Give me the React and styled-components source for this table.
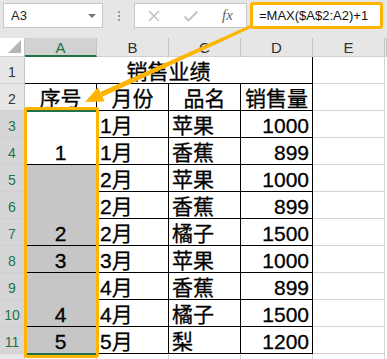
import React from 'react';
import styled, { createGlobalStyle } from 'styled-components';

const GlobalStyle = createGlobalStyle`
  body {
    margin: 0;
    background: #e6e6e6;
  }
`;

const Page = styled.div`
  position: relative;
  width: 387px;
  height: 359px;
  overflow: hidden;
  background: #e6e6e6;
  font-family: "Liberation Sans", "Noto Sans CJK SC", sans-serif;
`;

const Toolbar = styled.div`
  display: flex;
  align-items: flex-start;
  height: 38px;
  padding: 3px 0 0 3px;
  box-sizing: border-box;
`;

const NameBox = styled.div`
  width: 100px;
  height: 25px;
  box-sizing: border-box;
  background: #fff;
  border: 1px solid #c6c6c6;
  display: flex;
  align-items: center;
  justify-content: space-between;
  padding: 0 6px 0 7px;
  font-size: 13px;
  color: #222;
`;

const Caret = styled.span`
  width: 0;
  height: 0;
  border-left: 4px solid transparent;
  border-right: 4px solid transparent;
  border-top: 4px solid #777;
`;

const Dots = styled.div`
  width: 31px;
  height: 25px;
  display: flex;
  flex-direction: column;
  align-items: center;
  justify-content: center;
  gap: 2px;

  span {
    width: 2px;
    height: 2px;
    background: #9a9a9a;
  }
`;

const FxBox = styled.div`
  width: 113px;
  height: 25px;
  box-sizing: border-box;
  background: #fff;
  border: 1px solid #c6c6c6;
  display: flex;
  align-items: center;
  padding: 0 0 0 12px;
  gap: 22px;
`;

const Fx = styled.span`
  font-family: "Liberation Serif", serif;
  font-style: italic;
  font-size: 15px;
  color: #666;
  margin-left: 1px;
`;

const Formula = styled.div`
  margin: -1px 0 0 3px;
  width: 133px;
  height: 27px;
  box-sizing: border-box;
  background: #fff;
  border: 3px solid #ffb400;
  border-radius: 3px;
  display: flex;
  align-items: center;
  padding-left: 6px;
  font-size: 13px;
  color: #111;
`;

const Sheet = styled.div`
  display: grid;
  grid-template-columns: 25px repeat(5, 72px) 2px;
  grid-template-rows: 19px repeat(12, 27px);
  background: #fff;
`;

const ColHead = styled.div`
  grid-row: 1;
  grid-column: ${p => p.$c};
  box-sizing: border-box;
  background: ${p => (p.$sel ? '#d2d2d2' : '#e6e6e6')};
  border-right: 1px solid #c4c4c4;
  border-bottom: ${p => (p.$sel ? '2px solid #217346' : '1px solid #d0d0d0')};
  color: ${p => (p.$sel ? '#217346' : '#333')};
  font-size: 15px;
  display: flex;
  align-items: center;
  justify-content: center;
  padding-top: 1px;
`;

const Corner = styled.div`
  grid-row: 1;
  grid-column: 1;
  box-sizing: border-box;
  border-right: 1px solid #c4c4c4;
  border-bottom: 1px solid #d0d0d0;
  display: flex;
  align-items: flex-end;
  justify-content: flex-end;
  padding: 0 3px 3px 0;

  span {
    width: 0;
    height: 0;
    border-left: 13px solid transparent;
    border-bottom: 13px solid #b5b5b5;
  }
`;

const RowHead = styled.div`
  grid-column: 1;
  grid-row: ${p => p.$r + 1};
  box-sizing: border-box;
  background: ${p => (p.$sel ? '#d6d6d6' : '#e6e6e6')};
  border-right: 1px solid #c4c4c4;
  border-bottom: 1px solid #d0d0d0;
  color: ${p => (p.$sel ? '#217346' : '#333')};
  font-size: 14px;
  display: flex;
  align-items: center;
  justify-content: center;
  padding-top: 3px;
`;

const Cell = styled.div`
  grid-column: ${p => p.$c} / span ${p => p.$cs || 1};
  grid-row: ${p => p.$r + 1} / span ${p => p.$rs || 1};
  box-sizing: border-box;
  background: ${p => p.$bg || '#fff'};
  border-right: 1px solid ${p => (p.$t ? '#000' : '#d4d4d4')};
  border-bottom: 1px solid ${p => (p.$t ? '#000' : '#d4d4d4')};
  display: flex;
  align-items: flex-end;
  justify-content: ${p =>
    p.$align === 'right' ? 'flex-end' : p.$align === 'center' ? 'center' : 'flex-start'};
  padding: 0 3px;
  font-size: 21px;
  line-height: 22px;
  color: #000;
  white-space: nowrap;
  -webkit-text-stroke: 0.3px #000;
`;

const Selection = styled.div`
  position: absolute;
  left: 24px;
  top: 107px;
  width: 75px;
  height: 251px;
  box-sizing: border-box;
  border: 3px solid #ffb400;
  border-radius: 3px;
  box-shadow: inset 0 2px 0 #217346, inset 0 -2px 0 #217346;
  pointer-events: none;
`;

const Overlay = styled.svg`
  position: absolute;
  left: 0;
  top: 0;
  pointer-events: none;
`;

const months = [
  ['1月', '苹果', '1000'],
  ['1月', '香蕉', '899'],
  ['2月', '苹果', '1000'],
  ['2月', '香蕉', '899'],
  ['2月', '橘子', '1500'],
  ['3月', '苹果', '1000'],
  ['4月', '香蕉', '899'],
  ['4月', '橘子', '1500'],
  ['5月', '梨', '1200'],
];

const groups = [
  { r: 3, span: 2, v: '1', active: true },
  { r: 5, span: 3, v: '2' },
  { r: 8, span: 1, v: '3' },
  { r: 9, span: 2, v: '4' },
  { r: 11, span: 1, v: '5' },
];

const letters = ['A', 'B', 'C', 'D', 'E'];
const rowNums = Array.from({ length: 12 }, (_, i) => i + 1);

export default function App() {
  return (
    <Page>
      <GlobalStyle />
      <Toolbar>
        <NameBox>
          A3
          <Caret />
        </NameBox>
        <Dots>
          <span />
          <span />
          <span />
        </Dots>
        <FxBox>
          <svg width="14" height="14" viewBox="0 0 14 14">
            <path d="M2 2L12 12M12 2L2 12" stroke="#c2c2c2" strokeWidth="1.6" fill="none" />
          </svg>
          <svg width="16" height="14" viewBox="0 0 16 14">
            <path d="M1.5 7.5L5.5 11.5L14.5 2.5" stroke="#c2c2c2" strokeWidth="1.8" fill="none" />
          </svg>
          <Fx>fx</Fx>
        </FxBox>
        <Formula>=MAX($A$2:A2)+1</Formula>
      </Toolbar>

      <Sheet>
        <Corner>
          <span />
        </Corner>
        {letters.map((l, i) => (
          <ColHead key={l} $c={i + 2} $sel={l === 'A'}>
            {l}
          </ColHead>
        ))}
        <ColHead $c={7} />

        {rowNums.map(n => (
          <RowHead key={n} $r={n} $sel={n >= 3 && n <= 11}>
            {n < 12 ? n : ''}
          </RowHead>
        ))}

        <Cell $c={2} $cs={4} $r={1} $t $align="center">
          销售业绩
        </Cell>
        <Cell $c={2} $r={2} $t $align="center">序号</Cell>
        <Cell $c={3} $r={2} $t $align="center">月份</Cell>
        <Cell $c={4} $r={2} $t $align="center">品名</Cell>
        <Cell $c={5} $r={2} $t $align="center">销售量</Cell>

        {groups.map(g => (
          <Cell
            key={g.r}
            $c={2}
            $r={g.r}
            $rs={g.span}
            $t
            $align="center"
            $bg={g.active ? '#fff' : '#c6c6c6'}
          >
            {g.v}
          </Cell>
        ))}

        {months.map((m, i) => (
          <React.Fragment key={i}>
            <Cell $c={3} $r={i + 3} $t>{m[0]}</Cell>
            <Cell $c={4} $r={i + 3} $t>{m[1]}</Cell>
            <Cell $c={5} $r={i + 3} $t $align="right">{m[2]}</Cell>
          </React.Fragment>
        ))}

        {rowNums.map(n => (
          <Cell key={'e' + n} $c={6} $r={n} />
        ))}
        {[2, 3, 4, 5].map(c => (
          <Cell key={'r12' + c} $c={c} $r={12} />
        ))}
      </Sheet>

      <Selection />

      <Overlay width="387" height="359" viewBox="0 0 387 359">
        <polygon
          points="251,28 249.8,25.3 100.2,92.1 102.4,96.7"
          fill="#ffb400"
        />
        <polygon points="85,102 97.9,87.2 104.7,101.6" fill="#ffb400" />
      </Overlay>
    </Page>
  );
}
